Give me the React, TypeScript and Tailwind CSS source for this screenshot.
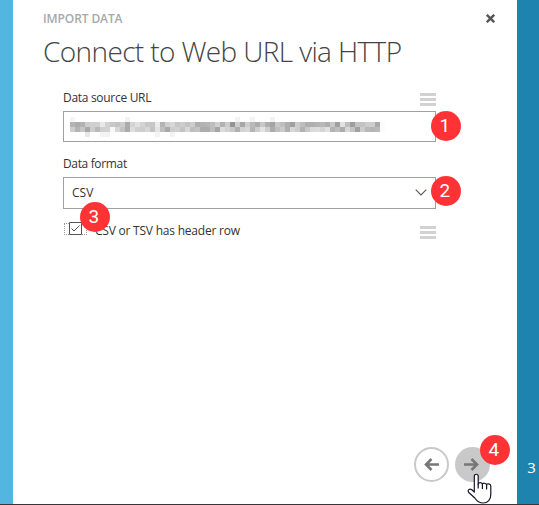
import React from 'react';

const mosaic: number[][] = [
  [245, 255, 255, 255, 255, 255, 255, 255, 255, 255, 255, 243, 255, 255, 255, 255, 255, 255, 255, 255, 255, 255, 255, 255, 255, 255, 255, 255, 255, 255, 255, 255, 255, 243, 255, 255, 243, 255, 255, 255, 243, 255, 255, 255, 255, 255, 255, 255, 255, 255, 255, 255, 255, 255, 255, 255, 255, 255, 255, 255, 255, 255, 255],
  [180, 172, 178, 205, 208, 208, 232, 210, 200, 195, 205, 172, 212, 225, 212, 200, 200, 235, 180, 208, 215, 198, 205, 195, 205, 175, 180, 182, 190, 208, 178, 205, 148, 205, 168, 205, 185, 172, 200, 175, 165, 200, 190, 175, 160, 205, 190, 175, 175, 180, 185, 175, 200, 160, 225, 190, 158, 195, 195, 205, 205, 168, 251],
  [205, 180, 198, 168, 205, 185, 208, 210, 248, 215, 195, 170, 222, 208, 205, 215, 195, 228, 190, 168, 205, 208, 195, 215, 190, 195, 172, 172, 190, 165, 220, 210, 200, 175, 210, 215, 180, 205, 228, 205, 172, 190, 202, 175, 215, 205, 178, 200, 218, 220, 212, 225, 180, 190, 172, 215, 195, 160, 205, 185, 180, 185, 251],
  [255, 255, 255, 232, 255, 255, 243, 243, 255, 255, 255, 255, 255, 255, 255, 255, 255, 243, 255, 255, 243, 255, 255, 255, 255, 255, 255, 255, 255, 255, 255, 255, 255, 255, 255, 255, 255, 255, 255, 255, 255, 255, 255, 255, 255, 255, 255, 255, 255, 255, 255, 255, 255, 255, 255, 255, 255, 255, 255, 255, 255, 255, 255],
];

function Badge({ n, place }: { n: number; place: string }) {
  return (
    <span className={`absolute z-10 flex size-[30px] items-center justify-center rounded-full bg-[#ff3336] pr-[1.500px] font-['Roboto',sans-serif] text-[19px] leading-none tracking-normal text-white ${place}`}>
      {n}
    </span>
  );
}

function Menu() {
  return (
    <span className="flex w-4 flex-col gap-[2px]">
      <i className="h-[3px] bg-[#d2d2d2]" />
      <i className="h-[3px] bg-[#d2d2d2]" />
      <i className="h-[3px] bg-[#d2d2d2]" />
    </span>
  );
}

export default function App() {
  return (
    <div className="relative flex h-[505px] w-[539px] overflow-hidden bg-white font-['Open_Sans',sans-serif] text-[#333]">
      <div className="w-[13px] shrink-0 bg-[#53b6e1]" />
      <main className="flex w-[504px] flex-col">
        <header className="pr-[22.5px] pl-[30px] pt-[11px]">
          <div className="flex h-4 items-start justify-between">
            <span className="text-[12px] font-semibold leading-4 tracking-[-0.1px] text-[#a8a8a8]">IMPORT DATA</span>
            <svg className="mt-[3px] size-[9px]" viewBox="0 0 9 9" stroke="#555" strokeWidth="2.4"><path d="M.8.8l7.4 7.4M8.2.8L.8 8.2" /></svg>
          </div>
          <h1 className="mt-[5px] h-[41px] whitespace-nowrap text-[28px] font-light leading-[39px] tracking-[-0.62px] text-[#444]">Connect to Web URL via HTTP</h1>
        </header>
        <section className="ml-[50px] w-[373px] pt-[16px] text-[12px] tracking-[-0.3px]">
          <div className="flex h-[22px] items-start justify-between">
            <label className="h-4 leading-[18px]">Data source URL</label>
            <span className="pt-[4px]"><Menu /></span>
          </div>
          <div className="relative h-[31px] border border-[#a0a0a0] pl-[6px] pt-[5px]">
            {mosaic.map((row, y) => (
              <div key={y} className="flex">
                {row.map((v, x) => <i key={x} className="size-[5px] shrink-0" style={{ backgroundColor: `rgb(${v},${v},${v})` }} />)}
              </div>
            ))}
            <Badge n={1} place="-right-[25.5px] -top-[1.5px]" />
          </div>
          <label className="mt-[13px] block h-[22px] leading-[18px] tracking-[-0.35px]">Data format</label>
          <div className="relative flex h-8 items-center justify-between border border-[#a0a0a0] pr-2 pl-2">
            <span className="tracking-normal">CSV</span>
            <svg className="mb-px h-[7px] w-[12px]" viewBox="0 0 12 7" fill="none" stroke="#555" strokeWidth="1.1"><path d="M.7.7L6 6 11.3.7" /></svg>
            <Badge n={2} place="-right-[25.5px] -top-[2.5px]" />
          </div>
          <div className="relative mt-[13px] flex h-6 items-start">
            <span className="ml-px mt-px flex h-[12px] w-[23px] justify-center border border-dotted border-[#999]">
              <svg className="-mt-[2px] size-[13px] shrink-0" viewBox="0 0 13 13" fill="white" stroke="#555"><path d="M.5.5h12v12H.5z" /><path d="M2.500 6.500l2.500 2.500L10.500 3.500" fill="none" /></svg>
            </span>
            <span className="ml-[8px] leading-[18px] tracking-[-0.22px]">CSV or TSV has header row</span>
            <span className="ml-auto pt-[4px]"><Menu /></span>
            <Badge n={3} place="left-[16.5px] -top-[20.5px]" />
          </div>
        </section>
        <footer className="mt-auto mb-[23px] flex justify-end gap-[6px] pr-[27px]">
          <button className="flex size-[35px] items-center justify-center rounded-full border-2 border-[#c9c9c9]">
            <svg className="size-[15px]" viewBox="0 0 15 15" fill="none" stroke="#777" strokeWidth="2.6"><path d="M15 7.500H2M7.500 2L2 7.500 7.500 13" /></svg>
          </button>
          <button className="relative flex size-[35px] items-center justify-center rounded-full bg-[#c9c9c9]">
            <svg className="mr-[2px] size-[15px]" viewBox="0 0 15 15" fill="none" stroke="#777" strokeWidth="2.6"><path d="M0 7.500H13M7.500 2L13 7.500 7.500 13" /></svg>
            <Badge n={4} place="left-[24.500px] -top-[12.500px]" />
          </button>
        </footer>
      </main>
      <aside className="flex w-[22px] items-end justify-center bg-[#1f83b0] pb-[27px] pl-[7px] text-[15px] text-white">3</aside>
      <svg className="absolute left-[467px] top-[473px] z-20 h-[31px] w-[25px]" viewBox="0 0 25 31" fill="white" stroke="#171427" strokeWidth="1.2" strokeLinejoin="round">
        <path d="M7.300 19V3.200c0-2.600 3.900-2.600 3.900 0v8c0-2.300 4.200-2 4.200 .3 0-2 4.200-1.600 4.200 .6 0-2 4.200-1.400 4.200 .9v8.500c0 5-3 8.500-7.500 8.500-4 0-6.500-2-8.500-5l-6-5.500c-2-2.300 1-4.500 3-2.700z" />
        <path d="M11.200 10.500v5M15.400 11.500v4.500M19.600 12v4.500" />
      </svg>
      <div className="absolute bottom-0 left-0 h-px w-full bg-[#393439]" />
    </div>
  );
}
